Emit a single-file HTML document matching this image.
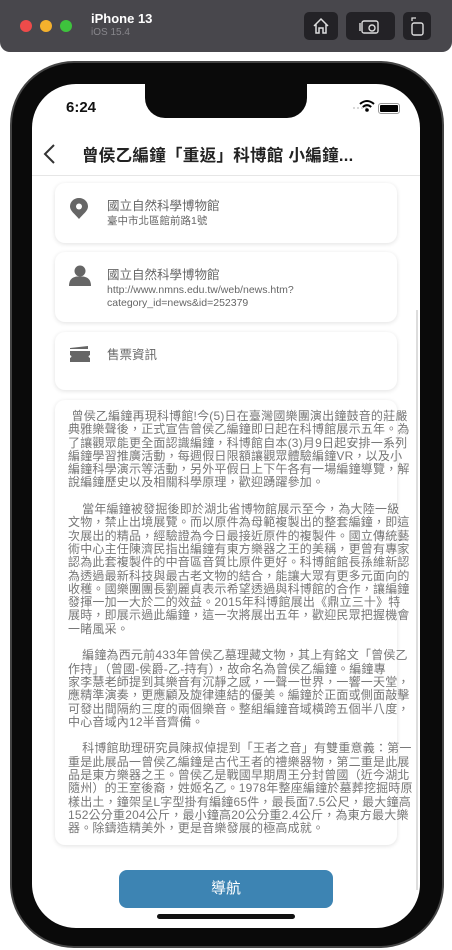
<!DOCTYPE html>
<html><head><meta charset="utf-8"><style>
*{margin:0;padding:0;box-sizing:border-box}
body{width:452px;height:950px;background:#fff;position:relative;overflow:hidden;font-family:"Liberation Sans","Noto Sans CJK TC",sans-serif}
.bar{position:absolute;left:0;top:0;width:452px;height:52px;background:#48474c;border-radius:0 0 10px 10px}
.dot{position:absolute;top:20px;width:12px;height:12px;border-radius:50%}
.btn{position:absolute;top:12px;height:28px;background:#232226;border-radius:5px}
.phone{position:absolute;left:12px;top:63px;width:430px;height:883px;background:#0a0a0a;border-radius:62px;box-shadow:0 0 0 2px #444}
.screen{position:absolute;left:32px;top:84px;width:388px;height:844px;background:#fff;border-radius:44px;overflow:hidden}
.notch{position:absolute;left:113px;top:-2px;width:162px;height:36px;background:#0a0a0a;border-radius:0 0 20px 20px}
.card{position:absolute;left:23px;width:342px;background:#fff;border-radius:10px;box-shadow:0 1px 5px rgba(0,0,0,.12)}
.t1{position:absolute;left:52px;font-size:12.5px;color:#666}
.t2{position:absolute;left:52px;font-size:10.5px;color:#666;line-height:13px}
.txt{font-size:12px;line-height:13.3px;color:#777;white-space:nowrap;letter-spacing:.2px}
</style></head><body>
<div class="bar">
<div class="dot" style="left:20px;background:#ee4b4a"></div>
<div class="dot" style="left:40px;background:#f4b12d"></div>
<div class="dot" style="left:60px;background:#3ec33d"></div>
<div style="position:absolute;left:91px;top:11px;color:#fff;font-weight:bold;font-size:13px">iPhone 13</div>
<div style="position:absolute;left:91px;top:27px;color:#88878c;font-size:10px">iOS 15.4</div>
<div class="btn" style="left:304px;width:34px"><svg width="34" height="28"><path d="M10 14 L17 7 L24 14 M12 12 V21 H15 V16 H19 V21 H22 V12" fill="none" stroke="#ddd" stroke-width="1.5"/></svg></div>
<div class="btn" style="left:346px;width:49px"><svg width="49" height="28"><rect x="16" y="9" width="16" height="12" rx="2" fill="none" stroke="#ddd" stroke-width="1.4"/><circle cx="26" cy="16" r="3" fill="none" stroke="#ddd" stroke-width="1.4"/><path d="M14 19 V11" stroke="#ddd" stroke-width="1.4"/></svg></div>
<div class="btn" style="left:403px;width:28px"><svg width="28" height="28"><rect x="9" y="11" width="11" height="12" rx="2" fill="none" stroke="#ddd" stroke-width="1.4"/><path d="M9 9 V6 H13" fill="none" stroke="#ddd" stroke-width="1.3"/></svg></div>
</div>
<div class="phone"></div>
<div class="screen">
<div class="notch"></div>
<div style="position:absolute;left:34px;top:15px;font-size:15px;font-weight:bold;color:#111">6:24</div>
<svg style="position:absolute;left:300px;top:15px" width="46" height="16"><g fill="#ccc"><circle cx="34" cy="9" r="1"/><circle cx="30" cy="9" r="1"/><circle cx="26" cy="9" r="1"/><circle cx="22" cy="9" r="1"/></g></svg>
<svg style="position:absolute;left:327px;top:15px" width="16" height="14"><path d="M1 5 Q8 -1 15 5" stroke="#000" stroke-width="2" fill="none"/><path d="M3.8 8 Q8 4.3 12.2 8" stroke="#000" stroke-width="2" fill="none"/><circle cx="8" cy="11" r="1.8"/></svg>
<div style="position:absolute;left:346px;top:19px;width:22px;height:11px;border:1.5px solid #999;border-radius:3px;padding:1px"><div style="background:#000;width:100%;height:100%;border-radius:1px"></div></div>
<svg style="position:absolute;left:10px;top:59px" width="16" height="22"><path d="M12 2 L3 11 L12 20" fill="none" stroke="#333" stroke-width="2"/></svg>
<div style="position:absolute;left:50px;top:58px;font-size:16.5px;font-weight:bold;color:#222;letter-spacing:.3px">曾侯乙編鐘「重返」科博館 小編鐘...</div>
<div style="position:absolute;left:0;top:91px;width:388px;height:1px;background:#e6e6e6"></div>
<div style="position:absolute;left:384px;top:226px;width:2px;height:580px;background:#ddd"></div>

<div class="card" style="top:99px;height:60px">
<svg style="position:absolute;left:14px;top:14px" width="20" height="24"><path d="M10 1 C4.5 1 1 5 1 9.5 C1 14 6 17 10 22 C14 17 19 14 19 9.5 C19 5 15.5 1 10 1 Z" fill="#666"/><circle cx="10" cy="9.5" r="3" fill="#fff"/></svg>
<div class="t1" style="top:12px">國立自然科學博物館</div>
<div class="t2" style="top:32px">臺中市北區館前路1號</div>
</div>
<div class="card" style="top:168px;height:70px">
<svg style="position:absolute;left:14px;top:13px" width="22" height="22"><circle cx="11" cy="6" r="5.5" fill="#666"/><path d="M0 21 C0 14 4 12 8 11.5 L14 11.5 C18 12 22 14 22 21 Z" fill="#666"/></svg>
<div class="t1" style="top:12px">國立自然科學博物館</div>
<div class="t2" style="top:32px">http://www.nmns.edu.tw/web/news.htm?<br>category_id=news&amp;id=252379</div>
</div>
<div class="card" style="top:248px;height:58px">
<svg style="position:absolute;left:13px;top:12px" width="24" height="20"><path d="M2 4 L20 2 V5 H2 Z" fill="#666"/><path d="M2 7 H22 V11 Q19 12.5 22 14 V18 H2 V14 Q5 12.5 2 11 Z" fill="#666"/></svg>
<div class="t1" style="top:12px">售票資訊</div>
</div>

<div class="card txt" style="top:316px;height:445px;padding:10px 0 0 13px">
&nbsp;曾侯乙編鐘再現科博館!今(5)日在臺灣國樂團演出鐘鼓音的莊嚴<br>典雅樂聲後，正式宣告曾侯乙編鐘即日起在科博館展示五年。為<br>了讓觀眾能更全面認識編鐘，科博館自本(3)月9日起安排一系列<br>編鐘學習推廣活動，每週假日限額讓觀眾體驗編鐘VR，以及小<br>編鐘科學演示等活動，另外平假日上下午各有一場編鐘導覽，解<br>說編鐘歷史以及相關科學原理，歡迎踴躍參加。<br><br>
&nbsp;&nbsp;&nbsp;&nbsp;當年編鐘被發掘後即於湖北省博物館展示至今，為大陸一級<br>文物，禁止出境展覽。而以原件為母範複製出的整套編鐘，即這<br>次展出的精品，經驗證為今日最接近原件的複製件。國立傳統藝<br>術中心主任陳濟民指出編鐘有東方樂器之王的美稱，更曾有專家<br>認為此套複製件的中音區音質比原件更好。科博館館長孫維新認<br>為透過最新科技與最古老文物的結合，能讓大眾有更多元面向的<br>收穫。國樂團團長劉麗貞表示希望透過與科博館的合作，讓編鐘<br>發揮一加一大於二的效益。2015年科博館展出《鼎立三十》特<br>展時，即展示過此編鐘，這一次將展出五年，歡迎民眾把握機會<br>一睹風采。<br><br>
&nbsp;&nbsp;&nbsp;&nbsp;編鐘為西元前433年曾侯乙墓理藏文物，其上有銘文「曾侯乙<br>作持」（曾國-侯爵-乙-持有），故命名為曾侯乙編鐘。編鐘專<br>家李慧老師提到其樂音有沉靜之感，一聲一世界，一響一天堂，<br>應精準演奏，更應顧及旋律連結的優美。編鐘於正面或側面敲擊<br>可發出間隔約三度的兩個樂音。整組編鐘音域橫跨五個半八度，<br>中心音域內12半音齊備。<br><br>
&nbsp;&nbsp;&nbsp;&nbsp;科博館助理研究員陳叔倬提到「王者之音」有雙重意義：第一<br>重是此展品一曾侯乙編鐘是古代王者的禮樂器物，第二重是此展<br>品是東方樂器之王。曾侯乙是戰國早期周王分封曾國（近今湖北<br>隨州）的王室後裔，姓姬名乙。1978年整座編鐘於墓葬挖掘時原<br>樣出土，鐘架呈L字型掛有編鐘65件，最長面7.5公尺，最大鐘高<br>152公分重204公斤，最小鐘高20公分重2.4公斤，為東方最大樂<br>器。除鑄造精美外，更是音樂發展的極高成就。
</div>

<div style="position:absolute;left:87px;top:786px;width:214px;height:38px;background:#3d84b3;border-radius:8px;color:#fff;font-size:15px;text-align:center;line-height:38px">導航</div>
<div style="position:absolute;left:125px;top:830px;width:138px;height:5px;background:#111;border-radius:3px"></div>
</div>
</body></html>
